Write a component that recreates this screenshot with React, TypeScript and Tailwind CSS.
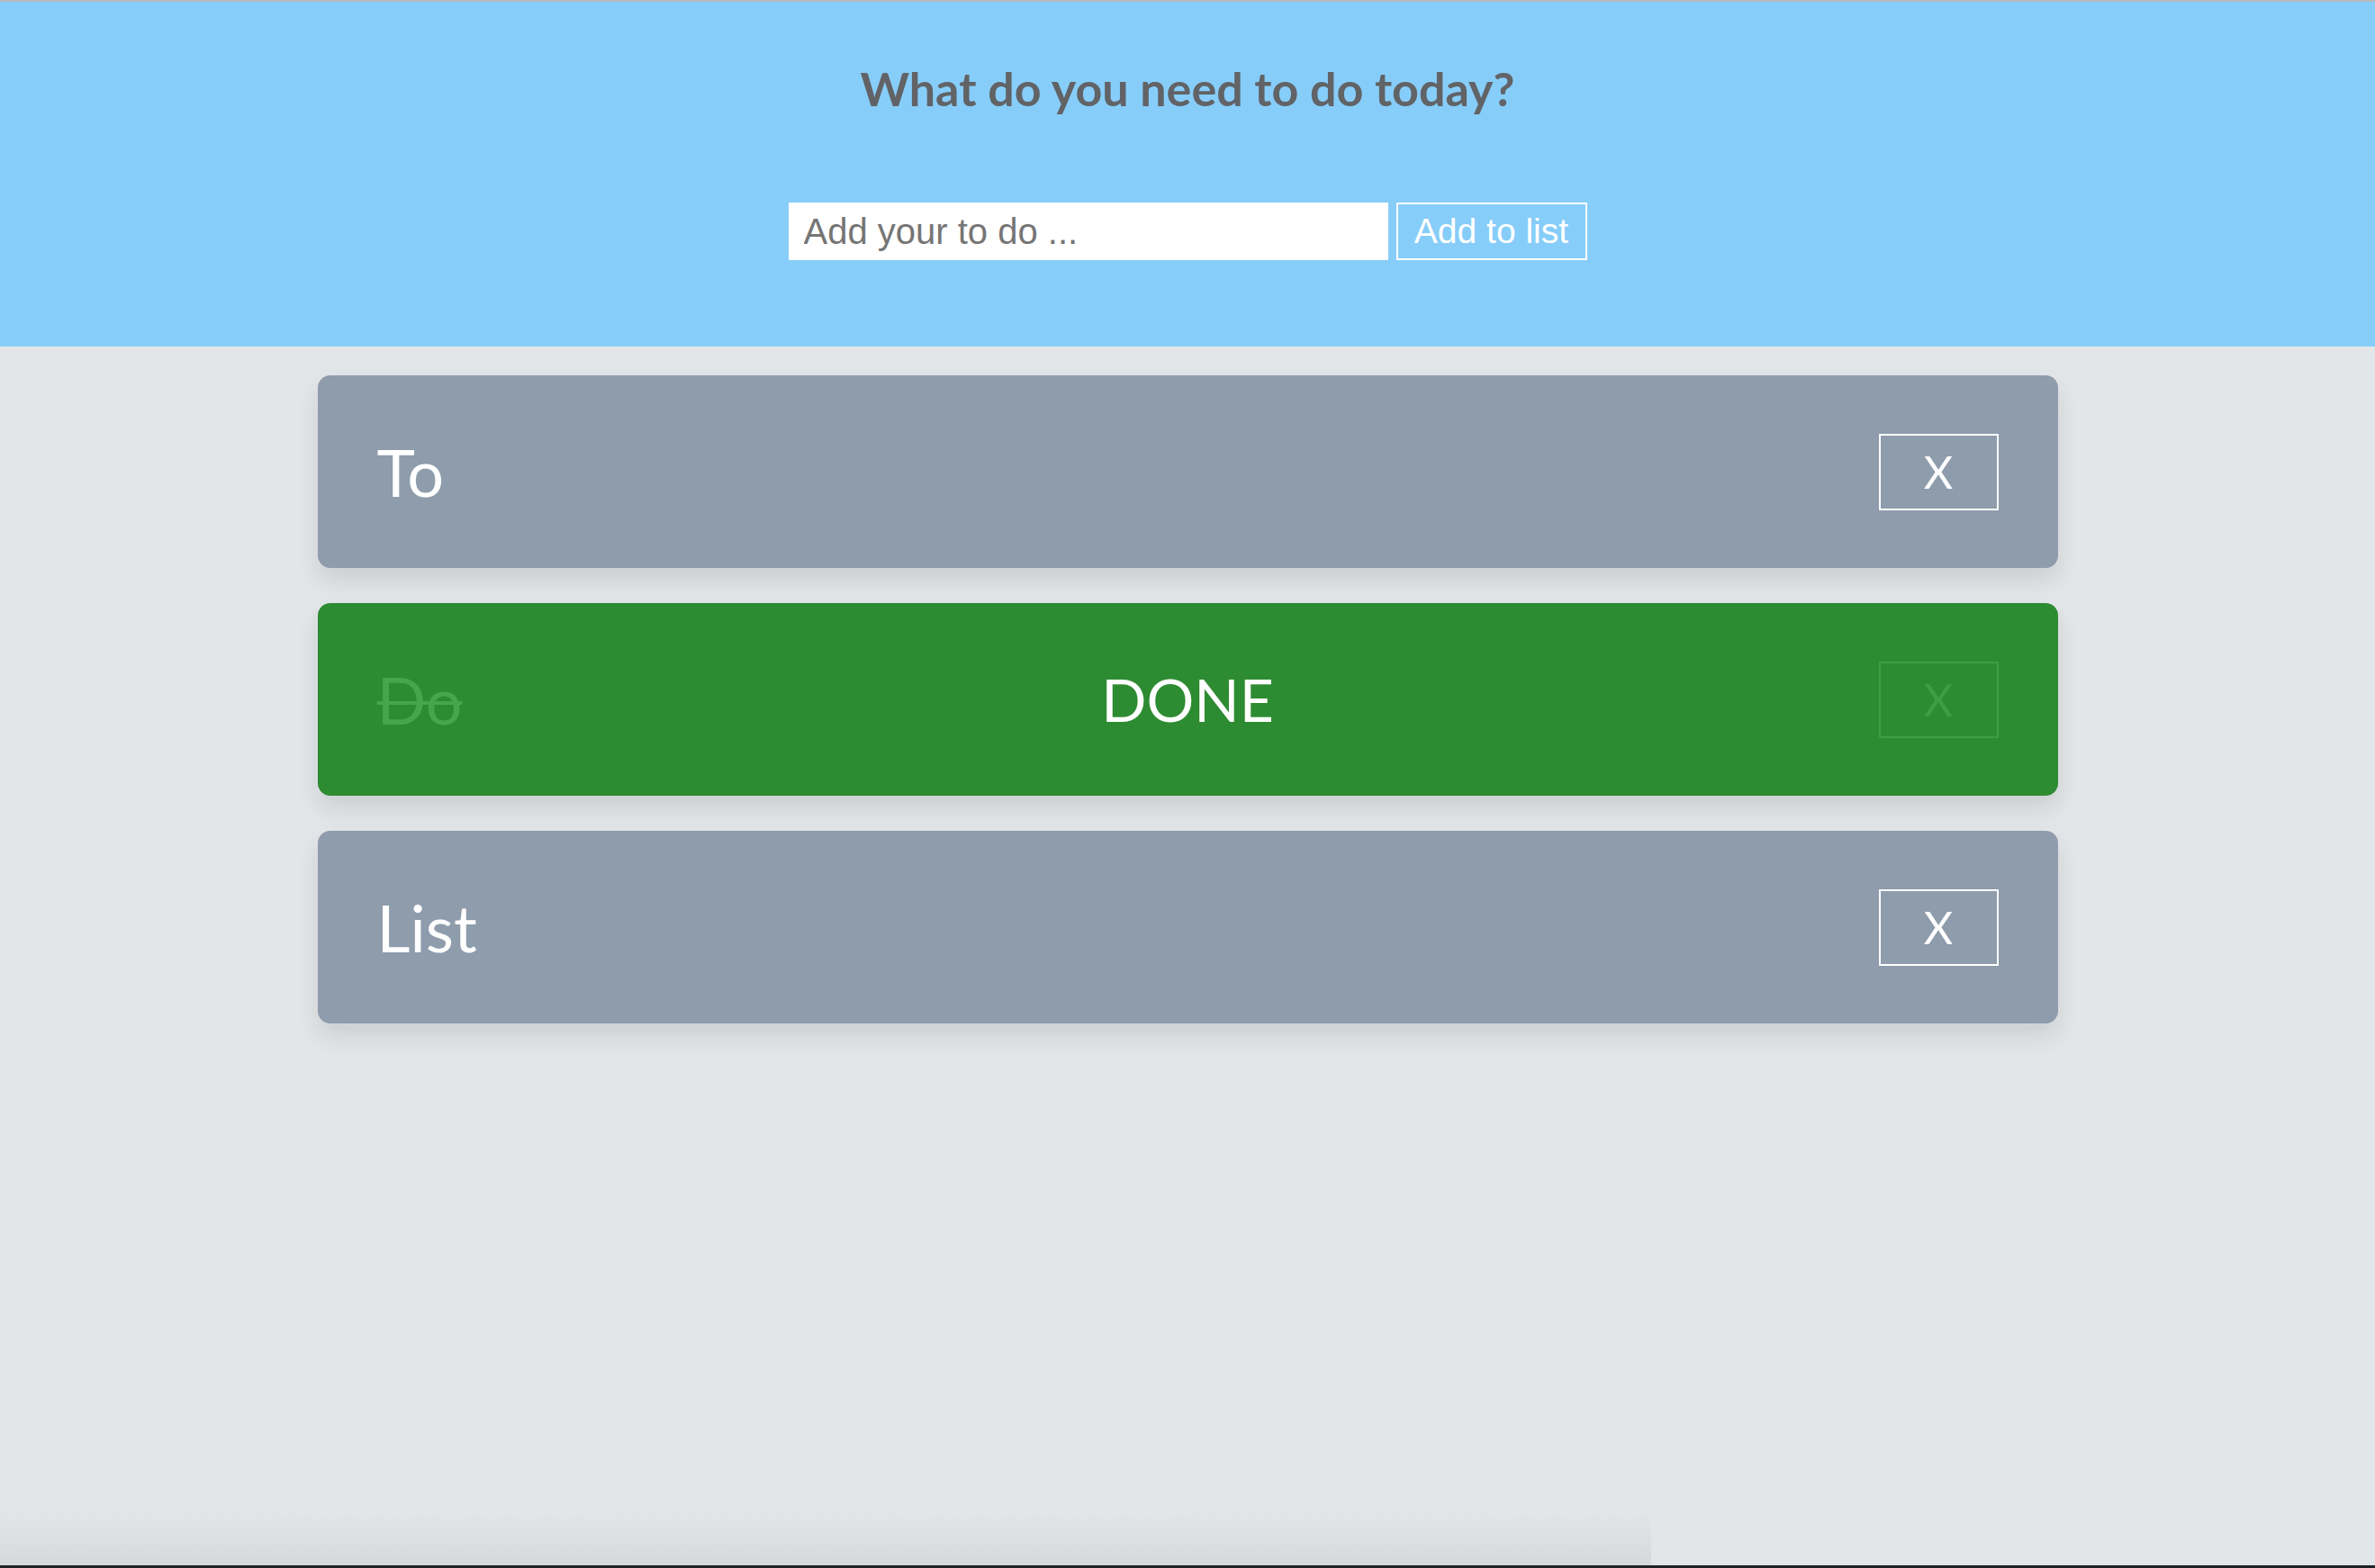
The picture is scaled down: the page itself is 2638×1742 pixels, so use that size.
import React, { useState } from "react";

type Todo = { id: number; text: string; done: boolean };

const TodoCard = ({ todo, onToggle, onRemove }: { todo: Todo; onToggle: () => void; onRemove: () => void }) => {
  return (
    <div
      onClick={onToggle}
      className={`grid h-[214px] grid-cols-[1fr_auto_1fr] items-center rounded-[14px] px-[66px] shadow-[0_14px_26px_rgba(0,0,0,0.1)] ${todo.done ? "bg-[#2d8b31]" : "bg-[#8e9cac]"}`}
    >
      <span
        className={`justify-self-start text-[72px] leading-none ${todo.done ? "text-[#45a64b] line-through decoration-[4px]" : "text-white"}`}
      >
        {todo.text}
      </span>
      <span className="text-[66px] leading-none text-white">{todo.done ? "DONE" : ""}</span>
      <button
        onClick={(e) => {
          e.stopPropagation();
          onRemove();
        }}
        className={`justify-self-end flex h-[85px] w-[133px] items-center justify-center border-2 text-[50px] leading-none ${todo.done ? "border-[#3f9d44] text-[#3f9d44]" : "border-white text-white"}`}
      >
        X
      </button>
    </div>
  );
};

const App = () => {
  const [value, setValue] = useState("");
  const [todos, setTodos] = useState<Todo[]>([
    { id: 1, text: "To", done: false },
    { id: 2, text: "Do", done: true },
    { id: 3, text: "List", done: false }
  ]);

  // Add a new todo from the input
  const handleAdd = () => {
    if (!value.trim()) return;
    setTodos(prev => [...prev, { id: Date.now(), text: value.trim(), done: false }]);
    setValue("");
  };

  return (
    <div className="flex h-screen flex-col border-t-2 border-[#b6babd] bg-[#e2e6e9] font-['Lato',sans-serif]">
      {/* Header */}
      <div className="flex h-[383px] shrink-0 flex-col items-center bg-[#87cdf9]">
        <h1 className="mt-[66px] text-[52px] font-bold leading-[60px] text-[#616366]">
          What do you need to do today?
        </h1>
        <div className="mt-[97px] flex items-center gap-[9px] font-['Liberation_Sans',sans-serif]">
          <input
            value={value}
            onChange={(e) => setValue(e.target.value)}
            placeholder="Add your to do ..."
            className="h-[64px] w-[666px] bg-white px-[17px] text-[40px] text-[#333] placeholder:text-[#757575] focus:outline-none"
          />
          <button
            onClick={handleAdd}
            className="h-[64px] w-[212px] border-2 border-white text-[39px] text-white"
          >
            Add to list
          </button>
        </div>
      </div>

      {/* List */}
      <div className="flex-1">
        <div className="mx-auto mt-[32px] flex w-[1933px] flex-col gap-[39px]">
          {todos.map(todo => (
            <TodoCard
              key={todo.id}
              todo={todo}
              onToggle={() => setTodos(prev => prev.map(t => (t.id === todo.id ? { ...t, done: !t.done } : t)))}
              onRemove={() => setTodos(prev => prev.filter(t => t.id !== todo.id))}
            />
          ))}
        </div>
      </div>

      {/* Window bottom edge */}
      <div className="flex h-[60px] shrink-0">
        <div className="w-[1834px] bg-gradient-to-b from-transparent to-[#d5d9dc]" />
        <div className="flex-1" />
      </div>
      <div className="h-[3px] shrink-0 bg-[#1d2326]" />
    </div>
  );
};

export default App;
